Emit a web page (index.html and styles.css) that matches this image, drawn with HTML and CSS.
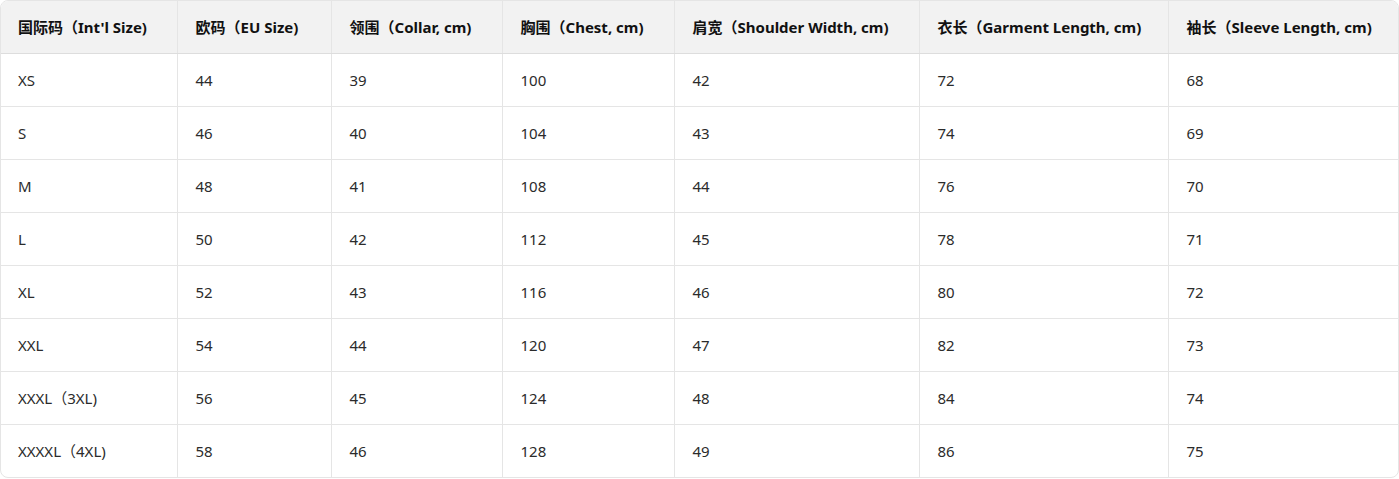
FILE: index.html
```html
<!DOCTYPE html>
<html lang="zh">
<head>
<meta charset="utf-8">
<link rel="stylesheet" href="styles.css">
</head>
<body>
<div class="wrap">
<table class="size-table">
<colgroup>
<col class="c1"><col class="c2"><col class="c3"><col class="c4"><col class="c5"><col class="c6"><col class="c7">
</colgroup>
<thead>
<tr>
<th>国际码（Int'l Size)</th>
<th>欧码（EU Size)</th>
<th>领围（Collar, cm)</th>
<th>胸围（Chest, cm)</th>
<th>肩宽（Shoulder Width, cm)</th>
<th>衣长（Garment Length, cm)</th>
<th>袖长（Sleeve Length, cm)</th>
</tr>
</thead>
<tbody>
<tr><td>XS</td><td>44</td><td>39</td><td>100</td><td>42</td><td>72</td><td>68</td></tr>
<tr><td>S</td><td>46</td><td>40</td><td>104</td><td>43</td><td>74</td><td>69</td></tr>
<tr><td>M</td><td>48</td><td>41</td><td>108</td><td>44</td><td>76</td><td>70</td></tr>
<tr><td>L</td><td>50</td><td>42</td><td>112</td><td>45</td><td>78</td><td>71</td></tr>
<tr><td>XL</td><td>52</td><td>43</td><td>116</td><td>46</td><td>80</td><td>72</td></tr>
<tr><td>XXL</td><td>54</td><td>44</td><td>120</td><td>47</td><td>82</td><td>73</td></tr>
<tr><td>XXXL（3XL)</td><td>56</td><td>45</td><td>124</td><td>48</td><td>84</td><td>74</td></tr>
<tr><td>XXXXL（4XL)</td><td>58</td><td>46</td><td>128</td><td>49</td><td>86</td><td>75</td></tr>
</tbody>
</table>
</div>
</body>
</html>
```

FILE: styles.css
```css
html, body {
  margin: 0;
  padding: 0;
  background: #ffffff;
}
body {
  font-family: "Noto Sans", "Noto Sans CJK SC", sans-serif;
  font-size: 15px;
  color: #2b2b2b;
}
.wrap {
  width: 1399px;
  box-sizing: border-box;
  border: 1px solid #e5e5e5;
  border-radius: 8px;
  overflow: hidden;
}
.size-table {
  width: 100%;
  border-collapse: collapse;
  table-layout: fixed;
}
.c1 { width: 176px; }
.c2 { width: 154px; }
.c3 { width: 171px; }
.c4 { width: 172px; }
.c5 { width: 245px; }
.c6 { width: 249px; }
.c7 { width: auto; }
.size-table th,
.size-table td {
  height: 52px;
  padding: 0 18px;
  text-align: left;
  vertical-align: middle;
  border-left: 1px solid #e5e5e5;
  border-top: 1px solid #e5e5e5;
  white-space: nowrap;
  box-sizing: border-box;
}
.size-table th:first-child,
.size-table td:first-child {
  border-left: none;
  padding-left: 17px;
}
.size-table thead th {
  border-top: none;
  background: #f2f2f2;
  font-weight: 700;
  color: #111111;
  border-bottom: 1px solid #dddddd;
}
.size-table tbody td {
  height: 53px;
}
```
